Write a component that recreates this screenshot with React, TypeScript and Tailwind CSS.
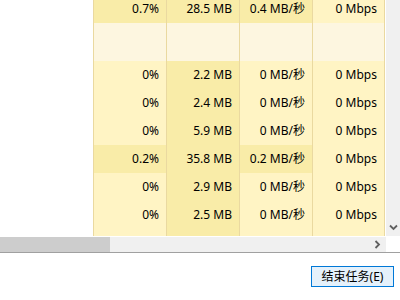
import React from "react";

// Heat colours used by the task list
const DARK = "bg-[#f9eca8]";
const LIGHT = "bg-[#fff4c4]";
const PALE = "bg-[#fdf6e0]";

type Cell = { text: string; bg: string };
type Row = { height: string; cells: Cell[] };

const c = (text: string, bg: string): Cell => ({ text, bg });

const rows: Row[] = [
  { height: "h-[28px]", cells: [c("0.7%", DARK), c("28.5 MB", DARK), c("0.4 MB/秒", DARK), c("0 Mbps", LIGHT)] },
  { height: "h-[38px]", cells: [c("", PALE), c("", PALE), c("", PALE), c("", PALE)] },
  { height: "h-[28px]", cells: [c("0%", LIGHT), c("2.2 MB", DARK), c("0 MB/秒", LIGHT), c("0 Mbps", LIGHT)] },
  { height: "h-[28px]", cells: [c("0%", LIGHT), c("2.4 MB", DARK), c("0 MB/秒", LIGHT), c("0 Mbps", LIGHT)] },
  { height: "h-[28px]", cells: [c("0%", LIGHT), c("5.9 MB", DARK), c("0 MB/秒", LIGHT), c("0 Mbps", LIGHT)] },
  { height: "h-[28px]", cells: [c("0.2%", DARK), c("35.8 MB", DARK), c("0.2 MB/秒", DARK), c("0 Mbps", LIGHT)] },
  { height: "h-[28px]", cells: [c("0%", LIGHT), c("2.9 MB", DARK), c("0 MB/秒", LIGHT), c("0 Mbps", LIGHT)] },
  { height: "h-[28px]", cells: [c("0%", LIGHT), c("2.5 MB", DARK), c("0 MB/秒", LIGHT), c("0 Mbps", LIGHT)] },
  { height: "h-[28px]", cells: [c("", LIGHT), c("", DARK), c("", LIGHT), c("", LIGHT)] },
];

const Chevron = ({ dir }: { dir: "down" | "right" }) => (
  <svg width="9" height="9" viewBox="0 0 9 9" className="block">
    {dir === "down" ? (
      <path d="M1 2.5 L4.5 6 L8 2.5" fill="none" stroke="#606060" strokeWidth="1.8" />
    ) : (
      <path d="M2.5 1 L6 4.5 L2.5 8" fill="none" stroke="#606060" strokeWidth="1.8" />
    )}
  </svg>
);

export default function App() {
  return (
    <div className="w-[400px] h-[300px] bg-white overflow-hidden flex flex-col text-[12px] text-black [font-family:'Noto_Sans','Noto_Sans_CJK_SC',sans-serif]">
      {/* Process list + vertical scrollbar */}
      <div className="flex h-[236px] shrink-0 overflow-hidden">
        <div className="w-[386px] overflow-hidden">
          <div className="-mt-[5px] flex flex-col">
            {rows.map((row, i) => (
              <div key={i} className={`flex ${row.height}`}>
                <div className="w-[93px] bg-white" />
                {row.cells.map((cell, j) => (
                  <div
                    key={j}
                    className={`w-[73px] border-l border-[#ead9a0] ${cell.bg} flex items-center justify-end pr-[7px] whitespace-nowrap ${j === 3 ? "border-r" : ""}`}
                  >
                    {cell.text}
                  </div>
                ))}
              </div>
            ))}
          </div>
        </div>
        <div className="w-[14px] bg-[#f0f0f0] flex flex-col justify-end items-center pb-[4px]">
          <Chevron dir="down" />
        </div>
      </div>

      {/* Horizontal scrollbar */}
      <div className="flex h-[17px] shrink-0 bg-white pt-[1px] border-b border-[#a0a0a0]">
        <div className="w-[386px] h-[15px] bg-[#f0f0f0] flex">
          <div className="w-[110px] bg-[#cdcdcd]" />
          <div className="flex-1 flex justify-end items-center pr-[4px]">
            <Chevron dir="right" />
          </div>
        </div>
      </div>

      {/* Footer */}
      <div className="flex-1 flex justify-end items-start pt-[13px] pr-[6px]">
        <button className="w-[83px] h-[21px] border border-[#0078d7] bg-[#e5f1fb] flex items-center justify-center text-[12px] leading-none">
          结束任务(E)
        </button>
      </div>
    </div>
  );
}
